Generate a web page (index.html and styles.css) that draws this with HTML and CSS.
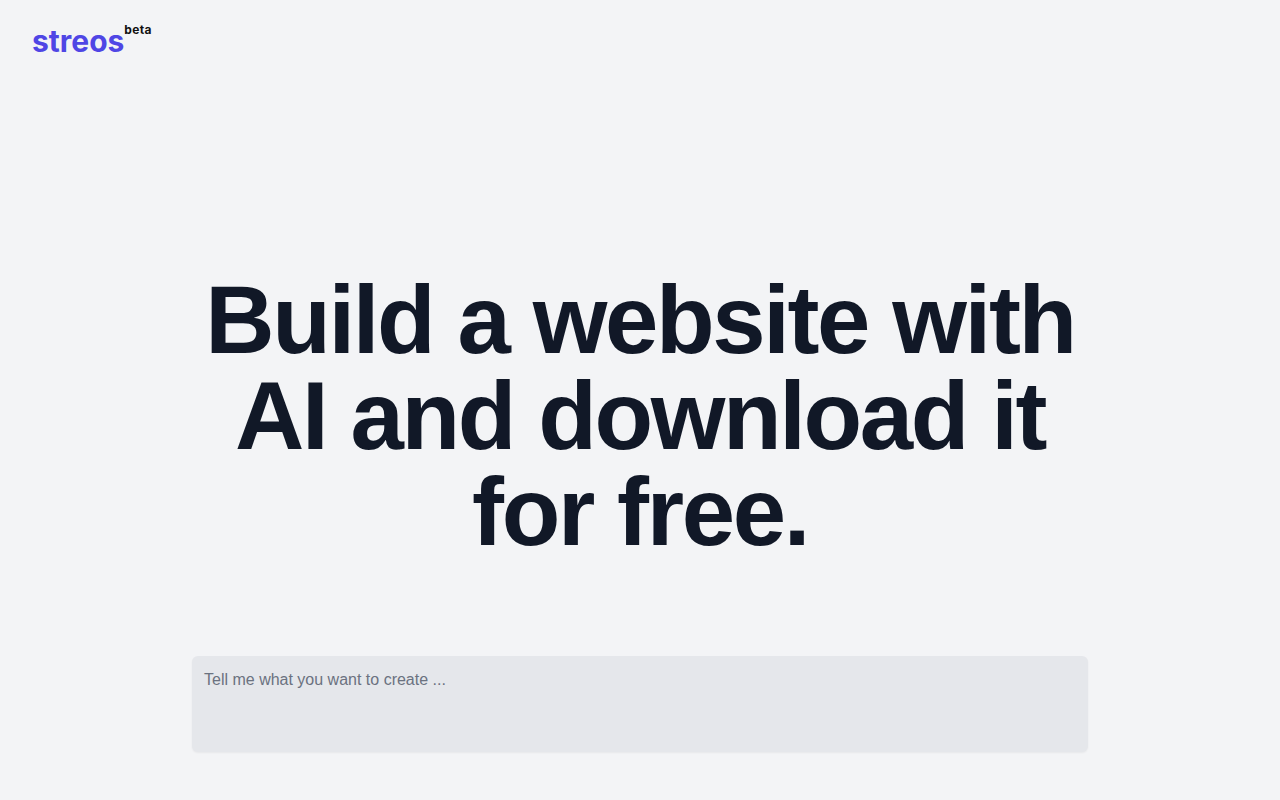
FILE: index.html
```html
<!DOCTYPE html>
<html lang="en">
<head>
<meta charset="utf-8">
<title>streos</title>
<link rel="stylesheet" href="styles.css">
</head>
<body>
<div class="page">
  <header class="top">
    <a class="logo" href="#">streos</a><span class="beta">beta</span>
  </header>
  <main class="main">
    <h1 class="headline">Build a website with AI and download it for free.</h1>
    <div class="prompt">
      <textarea class="input" placeholder="Tell me what you want to create ..."></textarea>
    </div>
  </main>
</div>
</body>
</html>
```
FILE: styles.css
```css
* { box-sizing: border-box; }
html, body { margin: 0; height: 100%; }
body { background: #f3f4f6; font-family: "Liberation Sans", Arial, sans-serif; }
.page { height: 800px; display: flex; flex-direction: column; overflow: hidden; }
.top { display: flex; align-items: flex-start; padding: 20px 32px 0; height: 72px; }
.logo { font-family: Inter, sans-serif; font-size: 30px; font-weight: 700; line-height: 42px; color: #4f46e5; text-decoration: none; }
.beta { font-family: Inter, sans-serif; font-size: 12px; font-weight: 700; line-height: 20px; letter-spacing: 0.03em; color: #111111; }
.main { flex: 1; display: flex; flex-direction: column; align-items: center; padding-top: 200px; }
.headline { width: 896px; margin: 0; text-align: center; font-size: 96px; line-height: 96px; font-weight: 700; letter-spacing: -0.025em; color: #111827; }
.prompt { width: 896px; margin-top: 96px; }
.input { display: block; width: 100%; height: 96px; padding: 12px; border: 0; border-radius: 6px; resize: none; outline: none; background: #e5e7eb; font-family: "Liberation Sans", Arial, sans-serif; font-size: 16px; line-height: 24px; color: #111827; box-shadow: 0 1px 2px rgba(0,0,0,.05); }
.input::placeholder { color: #6b7280; opacity: 1; }
```
